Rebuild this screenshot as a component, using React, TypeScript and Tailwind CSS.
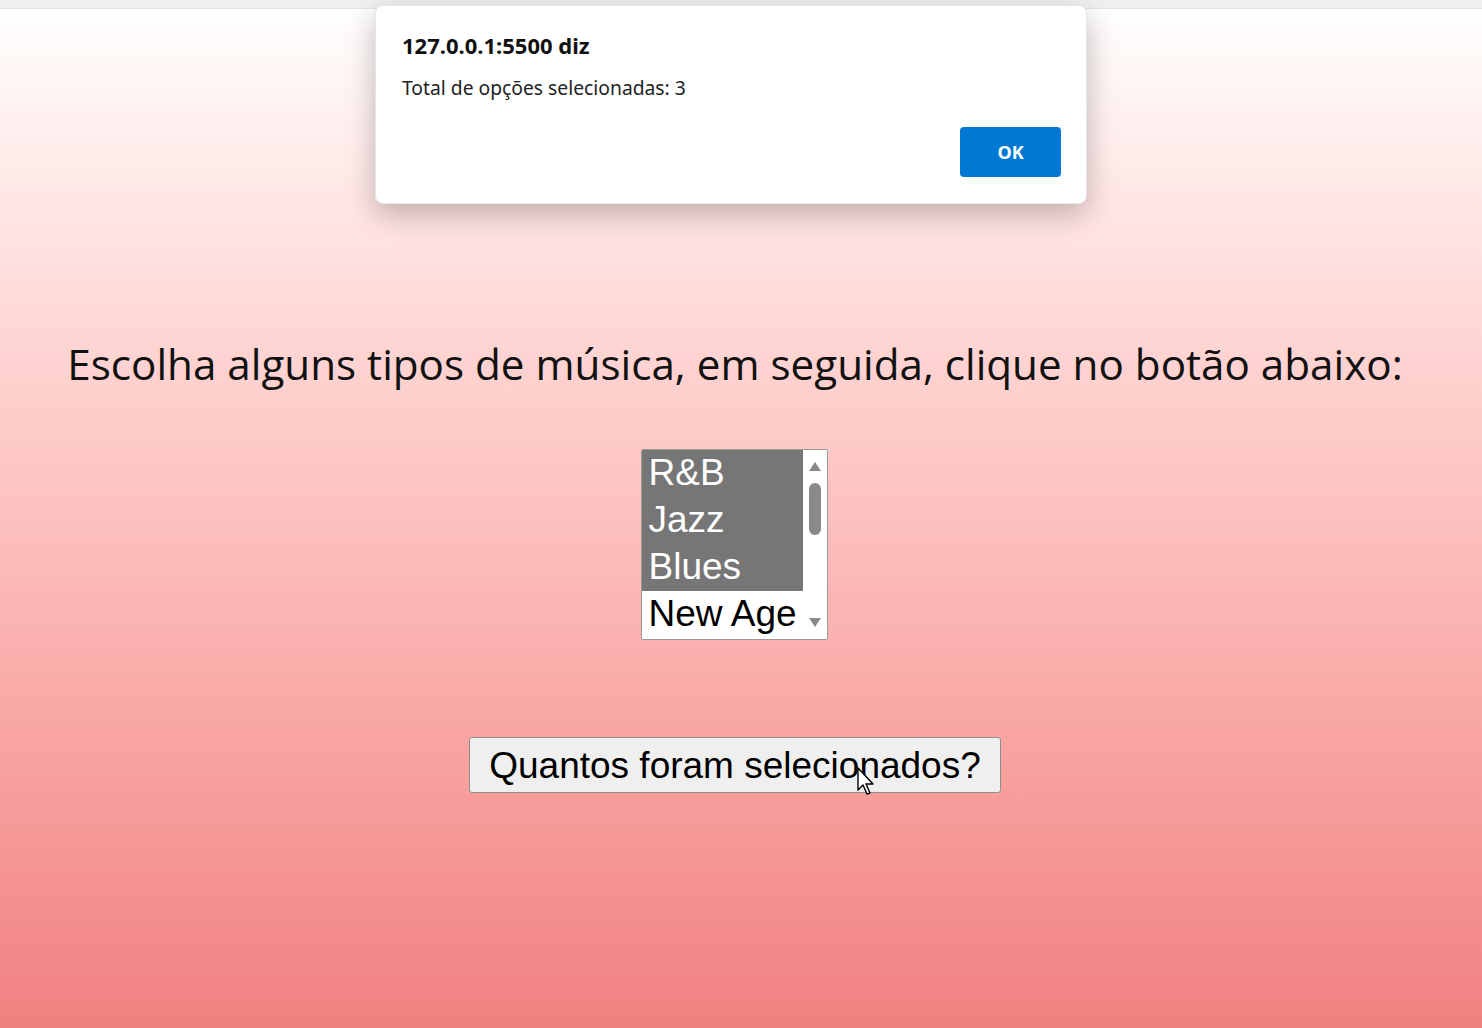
import React from "react";

export default function App() {
  const options = [
    { label: "R&B", sel: true },
    { label: "Jazz", sel: true },
    { label: "Blues", sel: true },
    { label: "New Age", sel: false },
  ];
  return (
    <div className="relative w-[1482px] h-[1028px] overflow-hidden bg-gradient-to-b from-[#ffffff] to-[#f08080]">
      <div className="h-[9px] bg-[#f0f0f0] border-b border-[#e4e4e4]" />
      <div className="flex flex-col items-center">
        <h1
          className="mt-[329px] ml-[-12px] text-[42.2px] leading-[52px] text-[#111] whitespace-nowrap"
          style={{ fontFamily: '"Open Sans", "Noto Sans", sans-serif' }}
        >
          Escolha alguns tipos de música, em seguida, clique no botão abaixo:
        </h1>
        <div className="mt-[59px] ml-[-14px] flex w-[187px] h-[191px] bg-white border border-[#9a9a9a] rounded-[2px] overflow-hidden">
          <div className="flex-1 flex flex-col">
            {options.map((o) => (
              <div
                key={o.label}
                className={
                  "h-[47px] pl-[7px] pb-[3px] flex items-center text-[37px] leading-[47px] whitespace-nowrap " +
                  (o.sel ? "bg-[#767676] text-white" : "bg-white text-black")
                }
                style={{ fontFamily: '"Liberation Sans", Arial, sans-serif' }}
              >
                {o.label}
              </div>
            ))}
          </div>
          <div className="w-[24px] flex flex-col items-center pt-[12px] pb-[12px]">
            <svg width="12" height="9" viewBox="0 0 12 9">
              <polygon points="6,0 12,9 0,9" fill="#8a8a8a" />
            </svg>
            <div className="mt-[12px] w-[12px] h-[52px] rounded-full bg-[#8a8a8a]" />
            <div className="flex-1" />
            <svg width="12" height="9" viewBox="0 0 12 9">
              <polygon points="0,0 12,0 6,9" fill="#8a8a8a" />
            </svg>
          </div>
        </div>
        <button
          className="mt-[97px] ml-[-12px] w-[532px] h-[56px] bg-[#efefef] border border-[#8f8f8f] rounded-[3px] text-[37px] text-black leading-none"
          style={{ fontFamily: '"Liberation Sans", Arial, sans-serif' }}
        >
          Quantos foram selecionados?
        </button>
      </div>

      {/* cursor */}
      <svg className="absolute left-[857px] top-[767px]" width="20" height="32" viewBox="0 0 20 32">
        <path d="M1 1 L1 23 L6 18 L10 27 L13 26 L9 17 L16 17 Z" fill="white" stroke="black" strokeWidth="1.4" strokeLinejoin="round" />
      </svg>

      {/* alert dialog */}
      <div
        className="absolute left-[375px] top-[5px] w-[712px] h-[199px] bg-white rounded-[8px] shadow-[0_10px_30px_rgba(0,0,0,0.25)] border border-[#e6e6e6] flex flex-col px-[26px]"
        style={{ fontFamily: '"Noto Sans", "Open Sans", sans-serif' }}
      >
        <div className="mt-[25px] text-[22px] font-bold text-[#111] leading-[28px]">127.0.0.1:5500 diz</div>
        <div className="mt-[16px] text-[19.3px] text-[#222] leading-[26px]">Total de opções selecionadas: 3</div>
        <div className="flex justify-end mt-[26px] mr-[-1px]">
          <button className="w-[101px] h-[50px] bg-[#0078d4] rounded-[4px] text-white text-[18px] font-bold">
            OK
          </button>
        </div>
      </div>
    </div>
  );
}
